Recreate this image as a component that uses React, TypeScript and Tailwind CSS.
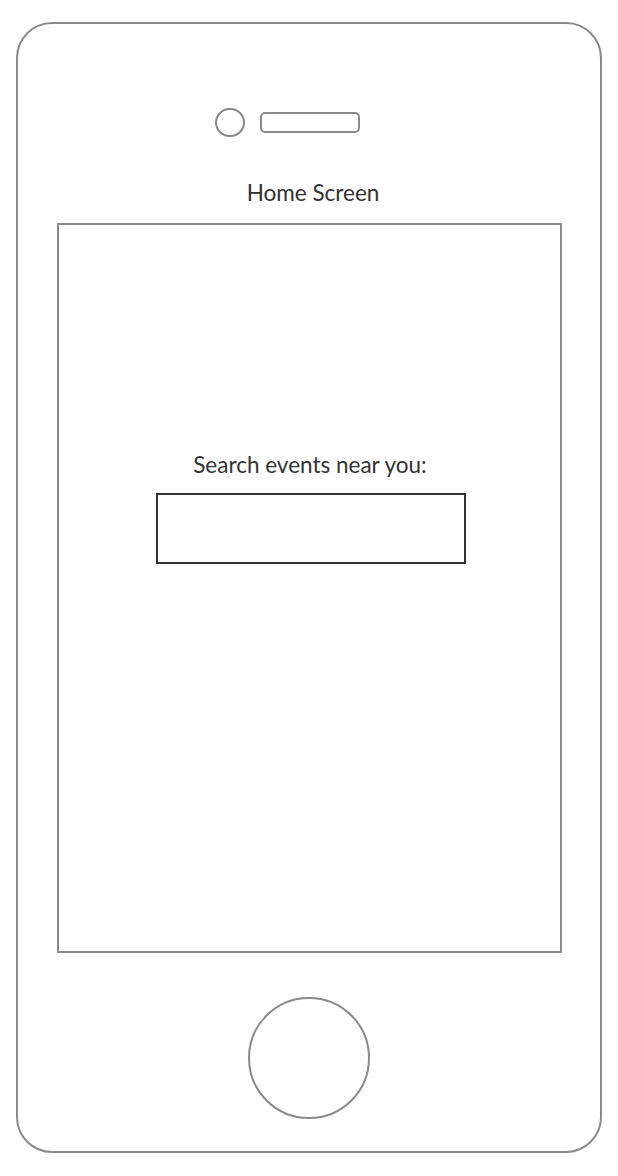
export default function App() {
  return (
    <div className="min-h-[1176px] w-[618px] bg-white pl-4 pt-[22px]" style={{ fontFamily: 'Lato, "Noto Sans", sans-serif' }}>
      <div className="flex h-[1131px] w-[586px] flex-col items-center rounded-[36px] border-2 border-[#8a8a8a]">
        <div className="mt-[84px] flex items-center gap-[15px] pr-[44px]">
          <div className="h-[29px] w-[30px] rounded-full border-2 border-[#8a8a8a]" />
          <div className="h-[21px] w-[100px] rounded-[5px] border-2 border-[#8a8a8a]" />
        </div>
        <div className="mt-[45px] pl-[8px] text-[22.5px] leading-none text-[#333]">Home Screen</div>
        <div className="mt-[18.5px] flex h-[730px] w-[505px] flex-col items-center border-2 border-[#8a8a8a]">
          <div className="mt-[229px] pl-[2px] text-[22.5px] leading-none text-[#333]">Search events near you:</div>
          <div className="ml-[4px] mt-[16px] h-[71px] w-[310px] border-2 border-[#333]" />
        </div>
        <div className="mt-[44px] h-[122px] w-[122px] rounded-full border-2 border-[#8a8a8a]" />
      </div>
    </div>
  );
}
